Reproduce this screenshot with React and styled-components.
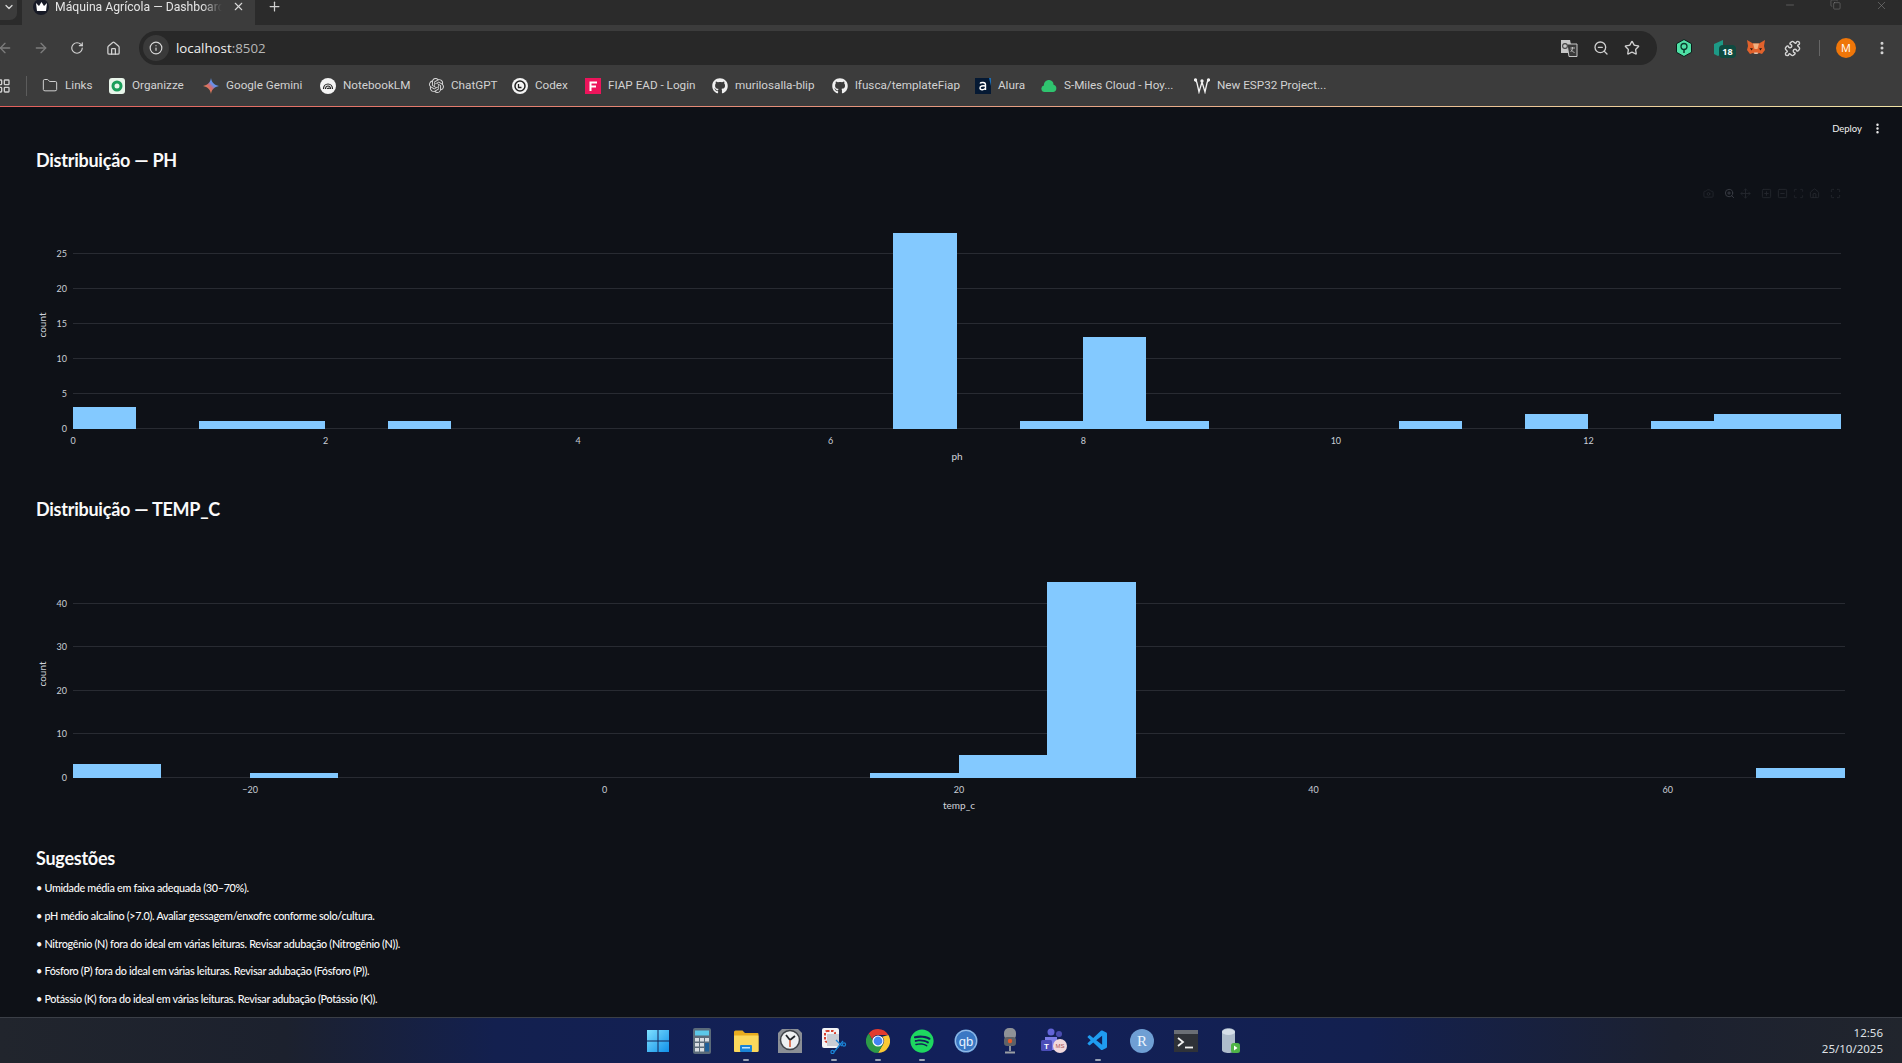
import React from "react";
import styled, { createGlobalStyle } from "styled-components";
import {
  ArrowLeft, ArrowRight, RotateCw, House, Info, Star, ZoomOut, ZoomIn, Puzzle, EllipsisVertical,
  X, Plus, Minus, ChevronDown, LayoutGrid, Folder, Copy, Camera, Move, SquarePlus, SquareMinus,
  Scan, Maximize,
} from "lucide-react";
import { FaGithub, FaSpotify } from "react-icons/fa";
import { SiOpenai } from "react-icons/si";
import { VscVscode } from "react-icons/vsc";

const GlobalStyle = createGlobalStyle`
  html, body { margin: 0; padding: 0; height: 100%; overflow: hidden; background: #0e1117; }
  * { box-sizing: border-box; }
`;

const Screen = styled.div`
  width: 1902px;
  height: 1063px;
  display: flex;
  flex-direction: column;
  overflow: hidden;
  font-family: "Noto Sans", sans-serif;
`;

/* ---------- browser chrome ---------- */
const TabStrip = styled.div`
  height: 25px;
  background: #2b2b2b;
  display: flex;
  align-items: stretch;
  color: #e6e6e6;
  position: relative;
`;
const TabList = styled.div`
  width: 17px;
  height: 20px;
  background: #3c3c3c;
  border-radius: 0 0 7px 0;
  display: flex;
  align-items: center;
  justify-content: center;
  padding-bottom: 7px;
  color: #d8d8d8;
`;
const ActiveTab = styled.div`
  margin-left: 5px;
  width: 233px;
  background: #3c3c3c;
  display: flex;
  align-items: center;
  padding: 0 0 12px 11px;
`;
const Favicon = styled.div`
  width: 16px;
  height: 16px;
  border-radius: 50%;
  background: #171a26;
  display: flex;
  align-items: center;
  justify-content: center;
  flex: none;
`;
const TabTitle = styled.span`
  margin-left: 6px;
  width: 167px;
  overflow: hidden;
  white-space: nowrap;
  font-family: "Roboto", sans-serif;
  font-size: 12.2px;
  color: #e4e4e4;
  -webkit-mask-image: linear-gradient(90deg, #000 88%, transparent);
  mask-image: linear-gradient(90deg, #000 88%, transparent);
`;
const TabClose = styled.span`
  margin-left: 10px;
  display: flex;
  color: #d8d8d8;
`;
const NewTab = styled.span`
  margin-left: 12px;
  display: flex;
  align-items: center;
  padding-bottom: 12px;
  color: #d0d0d0;
`;
const WindowControls = styled.div`
  margin-left: auto;
  display: flex;
  align-items: flex-start;
  color: #8a8a8a;
  padding-right: 14px;
  gap: 34px;
  margin-top: -1px;
`;
const Toolbar = styled.div`
  height: 40px;
  padding-top: 6px;
  background: #3c3c3c;
  display: flex;
  align-items: stretch;
`;
const NavButtons = styled.div`
  width: 139px;
  display: flex;
  align-items: center;
`;
const NavIcon = styled.span`
  width: 36px;
  margin-left: ${(p) => p.$ml || 0}px;
  display: flex;
  justify-content: center;
  color: ${(p) => (p.$dim ? "#7c7c7c" : "#d2d2d2")};
`;
const Omnibox = styled.div`
  width: 1518px;
  background: #282828;
  border-radius: 17px;
  display: flex;
  align-items: center;
  padding: 0 17px 0 4px;
`;
const SiteInfo = styled.span`
  width: 26px;
  height: 26px;
  border-radius: 50%;
  background: #3a3a3a;
  display: flex;
  align-items: center;
  justify-content: center;
  color: #d8d8d8;
`;
const Url = styled.span`
  margin-left: 7px;
  font-family: "Open Sans", sans-serif;
  font-size: 13.3px;
  color: #f0f0f0;
  span { color: #b8b8b8; }
`;
const OmniActions = styled.div`
  margin-left: auto;
  display: flex;
  align-items: center;
  gap: 15px;
  color: #cfcfcf;
`;
const Extensions = styled.div`
  flex: 1;
  display: flex;
  align-items: center;
  padding-left: 9px;
  color: #d4d4d4;
`;
const ExtSlot = styled.span`
  width: 36px;
  display: flex;
  justify-content: center;
  position: relative;
`;
const Badge = styled.span`
  position: absolute;
  left: 17px;
  top: 5px;
  width: 17px;
  height: 13px;
  border-radius: 4px;
  background: #0f4a40;
  color: #fff;
  font-family: "Open Sans", sans-serif;
  font-size: 9px;
  font-weight: 700;
  line-height: 13px;
  text-align: center;
`;
const ToolbarDivider = styled.span`
  width: 1px;
  height: 16px;
  background: #666;
  margin: 0 16px 0 9px;
`;
const Avatar = styled.span`
  width: 20px;
  height: 20px;
  border-radius: 50%;
  background: #ef7609;
  color: #fff;
  font-family: "Open Sans", sans-serif;
  font-size: 11px;
  line-height: 20px;
  text-align: center;
  flex: none;
`;
const MenuDots = styled.span`
  margin-left: 18px;
  display: flex;
  color: #d6d6d6;
`;
const BookmarkBar = styled.div`
  height: 41px;
  background: #3c3c3c;
  display: flex;
  align-items: center;
  color: #cfcfcf;
`;
const AppsIcon = styled.span`
  margin-left: -5px;
  display: flex;
`;
const BarDivider = styled.span`
  width: 1px;
  height: 20px;
  background: #5c5c5c;
  margin: 0 15px 0 15px;
`;
const Bookmark = styled.div`
  display: flex;
  align-items: center;
  gap: 7px;
  margin-right: 17px;
`;
const BookmarkIcon = styled.span`
  width: 16px;
  height: 16px;
  display: flex;
  align-items: center;
  justify-content: center;
  flex: none;
  color: #f0f0f0;
`;
const BookmarkLabel = styled.span`
  width: ${(p) => p.$w}px;
  padding-bottom: 2px;
  white-space: nowrap;
  font-family: "Roboto", sans-serif;
  font-size: 11.7px;
  color: #d2d2d2;
`;
const AccentLine = styled.div`
  height: 1px;
  background: linear-gradient(90deg, #e2605c 0%, #e59a80 50%, #f1e3a6 100%);
`;

/* ---------- streamlit page ---------- */
const Main = styled.main`
  flex: 1;
  position: relative;
  background: #0e1117;
  padding: 39px 36px 0;
  overflow: hidden;
  color: #fafafa;
  font-family: "Lato", sans-serif;
`;
const AppHeader = styled.div`
  position: absolute;
  top: 15px;
  right: 18px;
  display: flex;
  align-items: center;
  gap: 9px;
  font-size: 9.5px;
  color: #f2f2f2;
`;
const SectionTitle = styled.h3`
  margin: 0;
  height: 28px;
  line-height: 28px;
  font-size: 18px;
  font-weight: 700;
  letter-spacing: -0.25px;
  color: #fafafa;
`;
const ChartFrame = styled.div`
  position: relative;
  height: 321px;
`;
const ChartSvg = styled.svg`
  display: block;
  font-family: "Lato", sans-serif;
`;
const Modebar = styled.div`
  position: absolute;
  top: 14px;
  right: 25px;
  display: flex;
  align-items: center;
  gap: 5px;
  color: #24272e;
`;
const ModebarIcon = styled.span`
  display: flex;
  margin-left: ${(p) => (p.$group ? 5 : 0)}px;
  color: ${(p) => (p.$active ? "#3b3e46" : "inherit")};
`;
const Suggestions = styled.ul`
  list-style: none;
  margin: 2px 0 0;
  padding: 0;
`;
const Suggestion = styled.li`
  height: 27.8px;
  line-height: 27.8px;
  font-size: 10.8px;
  font-weight: 500;
  letter-spacing: -0.3px;
  color: #fafafa;
  white-space: nowrap;
`;

/* ---------- taskbar ---------- */
const Taskbar = styled.footer`
  height: 46px;
  flex: none;
  border-top: 1px solid #3b3f47;
  background: linear-gradient(90deg, #21252d 0%, #1c212e 15%, #13204f 26%, #12205a 50%, #13204f 72%, #1c2130 88%, #21252d 100%);
  display: flex;
  align-items: center;
`;
const TaskIcons = styled.div`
  margin-left: 636px;
  display: flex;
`;
const TaskTile = styled.div`
  width: 44px;
  height: 45px;
  display: flex;
  align-items: center;
  justify-content: center;
  position: relative;
  &::after {
    content: "";
    display: ${(p) => (p.$running ? "block" : "none")};
    position: absolute;
    bottom: 2px;
    left: 19px;
    width: 6px;
    height: 2.5px;
    border-radius: 2px;
    background: #9aa3b5;
  }
`;
const Clock = styled.div`
  margin-left: auto;
  padding-right: 19px;
  text-align: right;
  font-family: "Noto Sans", sans-serif;
  font-size: 11.5px;
  line-height: 16px;
  color: #dfe1e6;
`;

/* ---------- drawn icons ---------- */
const CrownIcon = () => (
  <svg width="11" height="9" viewBox="0 0 11 9"><path d="M0 1l3 3 2.5-4 2.5 4 3-3-1 8H1z" fill="#fff" /></svg>
);
const OrganizzeIcon = () => (
  <svg width="16" height="16" viewBox="0 0 16 16">
    <rect width="16" height="16" rx="3" fill="#e8f5ea" />
    <circle cx="8" cy="8" r="4" fill="none" stroke="#1a9e5a" strokeWidth="3" />
  </svg>
);
const GeminiIcon = () => (
  <svg width="16" height="16" viewBox="0 0 16 16">
    <defs>
      <linearGradient id="gem" x1="0" y1="1" x2="1" y2="0">
        <stop offset="0" stopColor="#e8a33b" />
        <stop offset=".45" stopColor="#d86a6a" />
        <stop offset=".6" stopColor="#6a8ee8" />
        <stop offset="1" stopColor="#4aa3f0" />
      </linearGradient>
    </defs>
    <path d="M8 0c.6 4.4 3.3 7.2 8 8-4.700.8-7.400 3.600-8 8-.6-4.400-3.300-7.200-8-8 4.700-.8 7.400-3.600 8-8z" fill="url(#gem)" />
  </svg>
);
const NotebookIcon = () => (
  <svg width="16" height="16" viewBox="0 0 16 16">
    <circle cx="8" cy="8" r="8" fill="#f4f4f4" />
    <path d="M3.500 11c0-3 2-5 4.500-5s4.500 2 4.500 5M5.500 11c0-1.600 1-3 2.500-3s2.500 1.400 2.500 3M7.500 11c0-.6.300-1 .8-1s.8.400.8 1" fill="none" stroke="#222" strokeWidth="1.200" />
  </svg>
);
const CodexIcon = () => (
  <svg width="16" height="16" viewBox="0 0 16 16">
    <circle cx="8" cy="8" r="8" fill="#f4f4f4" />
    <circle cx="8" cy="8" r="5" fill="none" stroke="#222" strokeWidth="1.500" />
    <path d="M6.500 6v3.500h3" fill="none" stroke="#222" strokeWidth="1.300" />
  </svg>
);
const FiapIcon = () => (
  <svg width="16" height="16" viewBox="0 0 16 16">
    <rect width="16" height="16" fill="#ed145b" />
    <path d="M4.500 3.500h7.500v2h-5.500v2h4.500v2h-4.500v3.500h-2z" fill="#fff" />
  </svg>
);
const AluraIcon = () => (
  <svg width="16" height="16" viewBox="0 0 16 16">
    <rect width="16" height="16" fill="#051933" />
    <path d="M14 0h2v8z" fill="#1c6fb8" />
    <path d="M5 5.500c.8-1.400 5.500-1.600 5.500 1.200v5.300M10.500 8c-3-.6-5.500 0-5.500 2s4 2.500 5.500 0" fill="none" stroke="#fff" strokeWidth="1.400" />
  </svg>
);
const CloudIcon = () => (
  <svg width="16" height="12" viewBox="0 0 16 12">
    <path d="M3.500 12a3.300 3.300 0 0 1-.6-6.500A5 5 0 0 1 8.300 0a4.500 4.500 0 0 1 4.200 4.800A3.700 3.700 0 0 1 12.500 12z" fill="#2fc46f" />
  </svg>
);
const WokwiIcon = () => (
  <svg width="16" height="16" viewBox="0 0 16 16" fill="none" stroke="#f2f2f2" strokeWidth="1.300">
    <path d="M1 2c1 0 1.500 1 2 3l2 9 3-10 3 10 2-9c.5-2 1-3 2-3" />
    <circle cx="1.500" cy="2" r="1" fill="#f2f2f2" />
    <circle cx="8" cy="3" r="1" fill="#f2f2f2" />
    <circle cx="14.500" cy="2" r="1" fill="#f2f2f2" />
  </svg>
);
const TranslateIcon = () => (
  <svg width="18" height="18" viewBox="0 0 18 18">
    <path d="M1 1h9l3 13H1z" fill="#c6c6c6" />
    <path d="M7 5h10v12.500H9z" fill="#3a3a3a" stroke="#c6c6c6" />
    <circle cx="5" cy="7" r="2.400" fill="none" stroke="#444" strokeWidth="1.100" />
    <path d="M10.500 9h4.500M12.500 8v1c0 2-1 3-2 4M11 10.500c.6 1.300 2 2.500 3.500 3" fill="none" stroke="#c6c6c6" strokeWidth=".9" />
  </svg>
);
const KeyHexIcon = () => (
  <svg width="16" height="18" viewBox="0 0 16 18">
    <path d="M8 .5l7.500 4.200v8.600L8 17.500.5 13.300V4.700z" fill="#4fe0a5" stroke="#0b1f1a" />
    <circle cx="8" cy="7.500" r="3" fill="none" stroke="#0b3a2c" strokeWidth="1.300" />
    <path d="M8 10.500V14" stroke="#0b3a2c" strokeWidth="1.500" />
  </svg>
);
const TealExtIcon = () => (
  <svg width="16" height="16" viewBox="0 0 16 16"><path d="M2 4l9-4v13l-5 3-4-2z" fill="#1d9a86" /></svg>
);
const FoxIcon = () => (
  <svg width="18" height="16" viewBox="0 0 18 16">
    <path d="M0 0l6 3.500h6L18 0l-1 6 1 4-3 4-3-1-1.500 1h-3L6 13l-3 1-3-4 1-4z" fill="#e2622c" />
    <path d="M6 3.500h6L10.500 9h-3z" fill="#f0b080" />
    <path d="M3 8l3 .5-1.500 2zM15 8l-3 .5 1.500 2z" fill="#26180f" />
    <path d="M7 12.500h4l-.5 1.500h-3z" fill="#d6c6b8" />
  </svg>
);
const WinIcon = () => (
  <svg width="24" height="24" viewBox="0 0 24 24">
    <defs>
      <linearGradient id="win" x1="0" y1="0" x2="1" y2="1">
        <stop offset="0" stopColor="#7fe0ff" />
        <stop offset="1" stopColor="#0f8fe8" />
      </linearGradient>
    </defs>
    <path d="M1 1h10.500v10.500H1zM12.500 1H23v10.500H12.500zM1 12.500h10.500V23H1zM12.500 12.500H23V23H12.500z" fill="url(#win)" />
  </svg>
);
const CalcIcon = () => (
  <svg width="20" height="26" viewBox="0 0 20 26">
    <rect x="1" width="18" height="26" rx="2" fill="#5b6b7a" />
    <rect x="3" y="2.500" width="14" height="5" fill="#5cc8e8" />
    <g fill="#d8dde2">
      <rect x="3" y="10" width="4" height="3.500" /><rect x="8" y="10" width="4" height="3.500" />
      <rect x="3" y="15" width="4" height="3.500" /><rect x="8" y="15" width="4" height="3.500" />
      <rect x="3" y="20" width="4" height="3.500" /><rect x="8" y="20" width="4" height="3.500" />
      <rect x="13" y="10" width="4" height="3.500" />
    </g>
    <rect x="13" y="15" width="4" height="8.500" fill="#1f5f9a" />
  </svg>
);
const FolderIcon = () => (
  <svg width="26" height="24" viewBox="0 0 26 24">
    <path d="M1 3a1.500 1.500 0 0 1 1.500-1.500h7L12 4h12.500A1 1 0 0 1 25.500 5v17.500H1z" fill="#e8ac1f" />
    <path d="M1 6.500h24.500v15a1.500 1.500 0 0 1-1.500 1.500H2.500A1.500 1.500 0 0 1 1 21.500z" fill="#fbd85c" />
    <rect x="7" y="16" width="12" height="7" rx="1" fill="#1a84d6" />
    <rect x="9" y="18" width="8" height="1.500" fill="#bfe5ff" />
  </svg>
);
const ClockIcon = () => (
  <svg width="26" height="26" viewBox="0 0 26 26">
    <path d="M5 1h16l4 4v20H1V5z" fill="#8b8f96" />
    <circle cx="13" cy="12" r="9.500" fill="#eef0f2" stroke="#3f4349" strokeWidth="1.500" />
    <path d="M13 12l-4-5M13 12l5-4" stroke="#23262b" strokeWidth="1.800" />
    <path d="M13 12v7" stroke="#d9552b" strokeWidth="1.500" />
  </svg>
);
const SnipIcon = () => (
  <svg width="26" height="26" viewBox="0 0 26 26">
    <rect x="1" y="0" width="17" height="20" rx="2" fill="#f3f4f6" />
    <rect x="4" y="3" width="10" height="11" rx="2" fill="none" stroke="#d8412f" strokeWidth="2" strokeDasharray="2.500 1.500" />
    <rect x="6" y="6" width="12" height="12" fill="#c9cdd4" />
    <path d="M13 24l9-11M15 12l6 6" stroke="#1a84d6" strokeWidth="1.300" />
    <circle cx="11.500" cy="24" r="1.600" fill="none" stroke="#1a84d6" strokeWidth="1.200" />
    <circle cx="23" cy="16.500" r="1.600" fill="none" stroke="#1a84d6" strokeWidth="1.200" />
  </svg>
);
const ChromeIcon = () => (
  <svg width="24" height="24" viewBox="0 0 24 24">
    <path d="M12 0a12 12 0 0 1 10.400 6H12a6 6 0 0 0-5.800 4.500L2.700 4.400A12 12 0 0 1 12 0z" fill="#e33b2e" />
    <path d="M22.400 6A12 12 0 0 1 12 24l5.200-9A6 6 0 0 0 16.200 7.700L22.400 6z" fill="#fcc934" />
    <path d="M12 24A12 12 0 0 1 2.700 4.400l5.200 9a6 6 0 0 0 9.300 1.600z" fill="#2d9a47" />
    <circle cx="12" cy="12" r="5.600" fill="#fff" />
    <circle cx="12" cy="12" r="4.400" fill="#4285f4" />
  </svg>
);
const QbIcon = () => (
  <svg width="24" height="24" viewBox="0 0 24 24">
    <circle cx="12" cy="12" r="11.500" fill="#6fa6e0" />
    <circle cx="12" cy="12" r="10.500" fill="#3a78c4" stroke="#cfe2f8" strokeWidth=".6" />
    <text x="12" y="16.500" textAnchor="middle" fontFamily="Liberation Sans, sans-serif" fontSize="13" fill="#e8f2ff">qb</text>
  </svg>
);
const MicIcon = () => (
  <svg width="16" height="26" viewBox="0 0 16 26">
    <rect x="2" y="0" width="12" height="12" rx="5" fill="#8e9297" />
    <rect x="2" y="9" width="12" height="9" rx="3" fill="#5e6268" />
    <circle cx="8" cy="13" r="2.200" fill="#e3592b" />
    <path d="M8 18v5M3 24.500h10" stroke="#9a9ea4" strokeWidth="1.800" />
  </svg>
);
const TeamsIcon = () => (
  <svg width="26" height="26" viewBox="0 0 26 26">
    <circle cx="10" cy="4" r="3.500" fill="#6264d8" />
    <circle cx="18" cy="6" r="3" fill="#4a4cb0" />
    <path d="M4 9h12v13H4z" fill="#7b7de8" />
    <rect x="0" y="12" width="11" height="11" rx="1.500" fill="#4b4db8" />
    <text x="5.500" y="20.500" textAnchor="middle" fontFamily="Liberation Sans, sans-serif" fontSize="8" fontWeight="700" fill="#fff">T</text>
    <circle cx="19" cy="18" r="7" fill="#f2d9dc" />
    <text x="19" y="20" textAnchor="middle" fontFamily="Liberation Sans, sans-serif" fontSize="6" fill="#a55">MS</text>
  </svg>
);
const RIcon = () => (
  <svg width="24" height="24" viewBox="0 0 24 24">
    <circle cx="12" cy="12" r="12" fill="#6f9fd4" />
    <text x="12" y="17" textAnchor="middle" fontFamily="Liberation Serif, serif" fontSize="15" fill="#eef5fc">R</text>
  </svg>
);
const TerminalIcon = () => (
  <svg width="24" height="22" viewBox="0 0 24 22">
    <rect width="24" height="22" fill="#2f3238" />
    <rect width="24" height="4" fill="#6a6e75" />
    <path d="M4 8l5 4-5 4" fill="none" stroke="#f2f2f2" strokeWidth="1.800" />
    <path d="M11 17.500h8" stroke="#f2f2f2" strokeWidth="1.800" />
  </svg>
);
const DbIcon = () => (
  <svg width="20" height="26" viewBox="0 0 20 26">
    <path d="M2 4c0-5 13-5 13 0v18c0 4-13 4-13 0z" fill="#aebccb" />
    <ellipse cx="8.500" cy="4" rx="6.500" ry="3" fill="#d5dee8" />
    <rect x="11" y="15" width="9" height="10" rx="2.500" fill="#4fb347" />
    <path d="M14 17.500l3.500 2.500-3.500 2.500z" fill="#fff" />
  </svg>
);

/* ---------- chart ---------- */
const PLOT_LEFT = 37;
const BASELINE = 254.5;

function Histogram({ plotWidth, xMin, xMax, binSize, bins, xTicks, xTitle, yTicks, yScale }) {
  const scaleX = plotWidth / (xMax - xMin);
  const toX = (v) => PLOT_LEFT + (v - xMin) * scaleX;
  return (
    <ChartSvg width="1830" height="321" viewBox="0 0 1830 321">
      {yTicks.map((t) => {
        const y = Math.round(BASELINE - t * yScale - 0.5) + 0.5;
        return (
          <g key={t}>
            <line x1={PLOT_LEFT} x2={PLOT_LEFT + plotWidth} y1={y} y2={y} stroke="#282b32" />
            <text x="31" y={y + 3} textAnchor="end" fontSize="9" fill="#c9ced6">{t}</text>
          </g>
        );
      })}
      {bins.map(([start, count]) => (
        <rect
          key={start}
          x={toX(start) - 0.4}
          y={BASELINE - 0.5 - count * yScale + (count > 20 ? 1 : 0)}
          width={binSize * scaleX}
          height={count * yScale + 1 - (count > 20 ? 1 : 0)}
          fill="#83c9ff"
          shapeRendering="crispEdges"
        />
      ))}
      {xTicks.map((t) => (
        <text key={t} x={toX(t)} y="270" textAnchor="middle" fontSize="9" fill="#c9ced6">
          {t < 0 ? `\u2212${-t}` : t}
        </text>
      ))}
      <text x={PLOT_LEFT + plotWidth / 2} y="285.500" textAnchor="middle" fontSize="10" fill="#d0d4db">{xTitle}</text>
      <text transform="translate(9.500 151) rotate(-90)" textAnchor="middle" fontSize="10" fill="#d0d4db">count</text>
    </ChartSvg>
  );
}

const phBins = [[0, 3], [1, 1], [1.5, 1], [2.5, 1], [6.5, 28], [7.5, 1], [8, 13], [8.5, 1], [10.5, 1], [11.5, 2], [12.5, 1], [13, 2], [13.5, 2]];
const tempBins = [[-30, 3], [-20, 1], [15, 1], [20, 5], [25, 45], [65, 2]];

const bookmarks = [
  { label: "Links", w: 27, icon: <Folder size={17} strokeWidth={1.5} color="#d0d0d0" /> },
  { label: "Organizze", w: 54, icon: <OrganizzeIcon /> },
  { label: "Google Gemini", w: 77, icon: <GeminiIcon /> },
  { label: "NotebookLM", w: 68, icon: <NotebookIcon /> },
  { label: "ChatGPT", w: 44, icon: <SiOpenai size={15} color="#d8d8d8" /> },
  { label: "Codex", w: 33, icon: <CodexIcon /> },
  { label: "FIAP EAD - Login", w: 87, icon: <FiapIcon /> },
  { label: "murilosalla-blip", w: 80, icon: <FaGithub size={16} /> },
  { label: "lfusca/templateFiap", w: 103, icon: <FaGithub size={16} /> },
  { label: "Alura", w: 26, icon: <AluraIcon /> },
  { label: "S-Miles Cloud - Hoy...", w: 113, icon: <CloudIcon /> },
  { label: "New ESP32 Project...", w: 108, icon: <WokwiIcon /> },
];

const taskIcons = [
  { key: "win", icon: <WinIcon /> },
  { key: "calc", icon: <CalcIcon /> },
  { key: "folder", icon: <FolderIcon />, running: true },
  { key: "clock", icon: <ClockIcon /> },
  { key: "snip", icon: <SnipIcon />, running: true },
  { key: "chrome", icon: <ChromeIcon />, running: true },
  { key: "spotify", icon: <FaSpotify size={24} color="#1ed760" />, running: true },
  { key: "qb", icon: <QbIcon /> },
  { key: "mic", icon: <MicIcon /> },
  { key: "teams", icon: <TeamsIcon /> },
  { key: "vscode", icon: <VscVscode size={24} color="#1f9cf0" />, running: true },
  { key: "r", icon: <RIcon /> },
  { key: "term", icon: <TerminalIcon /> },
  { key: "db", icon: <DbIcon /> },
];

const suggestions = [
  "• Umidade média em faixa adequada (30–70%).",
  "• pH médio alcalino (>7.0). Avaliar gessagem/enxofre conforme solo/cultura.",
  "• Nitrogênio (N) fora do ideal em várias leituras. Revisar adubação (Nitrogênio (N)).",
  "• Fósforo (P) fora do ideal em várias leituras. Revisar adubação (Fósforo (P)).",
  "• Potássio (K) fora do ideal em várias leituras. Revisar adubação (Potássio (K)).",
];

export default function App() {
  return (
    <Screen>
      <GlobalStyle />
      <TabStrip>
        <TabList><ChevronDown size={12} strokeWidth={2.5} /></TabList>
        <ActiveTab>
          <Favicon><CrownIcon /></Favicon>
          <TabTitle>Máquina Agrícola — Dashboard</TabTitle>
          <TabClose><X size={13} /></TabClose>
        </ActiveTab>
        <NewTab><Plus size={15} /></NewTab>
        <WindowControls>
          <Minus size={12} strokeWidth={1} />
          <Copy size={11} strokeWidth={1} />
          <X size={13} strokeWidth={1} />
        </WindowControls>
      </TabStrip>
      <Toolbar>
        <NavButtons>
          <NavIcon $dim $ml={-13}><ArrowLeft size={16} /></NavIcon>
          <NavIcon $dim><ArrowRight size={16} /></NavIcon>
          <NavIcon><RotateCw size={14} /></NavIcon>
          <NavIcon><House size={15} /></NavIcon>
        </NavButtons>
        <Omnibox>
          <SiteInfo><Info size={14} /></SiteInfo>
          <Url>localhost<span>:8502</span></Url>
          <OmniActions>
            <TranslateIcon />
            <ZoomOut size={16} />
            <Star size={16} />
          </OmniActions>
        </Omnibox>
        <Extensions>
          <ExtSlot><KeyHexIcon /></ExtSlot>
          <ExtSlot><TealExtIcon /><Badge>18</Badge></ExtSlot>
          <ExtSlot><FoxIcon /></ExtSlot>
          <ExtSlot><Puzzle size={17} /></ExtSlot>
          <ToolbarDivider />
          <Avatar>M</Avatar>
          <MenuDots><EllipsisVertical size={16} strokeWidth={2.5} /></MenuDots>
        </Extensions>
      </Toolbar>
      <BookmarkBar>
        <AppsIcon><LayoutGrid size={16} /></AppsIcon>
        <BarDivider />
        {bookmarks.map((b) => (
          <Bookmark key={b.label}>
            <BookmarkIcon>{b.icon}</BookmarkIcon>
            <BookmarkLabel $w={b.w}>{b.label}</BookmarkLabel>
          </Bookmark>
        ))}
      </BookmarkBar>
      <AccentLine />
      <Main>
        <AppHeader>
          <span>Deploy</span>
          <EllipsisVertical size={13} strokeWidth={2.5} />
        </AppHeader>
        <SectionTitle>Distribuição — PH</SectionTitle>
        <ChartFrame>
          <Histogram
            plotWidth={1768}
            xMin={0}
            xMax={14}
            binSize={0.5}
            bins={phBins}
            xTicks={[0, 2, 4, 6, 8, 10, 12]}
            xTitle="ph"
            yTicks={[0, 5, 10, 15, 20, 25]}
            yScale={7}
          />
          <Modebar>
            <ModebarIcon><Camera size={11} /></ModebarIcon>
            <ModebarIcon $group $active><ZoomIn size={11} /></ModebarIcon>
            <ModebarIcon><Move size={11} /></ModebarIcon>
            <ModebarIcon $group><SquarePlus size={11} /></ModebarIcon>
            <ModebarIcon><SquareMinus size={11} /></ModebarIcon>
            <ModebarIcon><Scan size={11} /></ModebarIcon>
            <ModebarIcon><House size={11} /></ModebarIcon>
            <ModebarIcon $group><Maximize size={11} /></ModebarIcon>
          </Modebar>
        </ChartFrame>
        <SectionTitle>Distribuição — TEMP_C</SectionTitle>
        <ChartFrame>
          <Histogram
            plotWidth={1772}
            xMin={-30}
            xMax={70}
            binSize={5}
            bins={tempBins}
            xTicks={[-20, 0, 20, 40, 60]}
            xTitle="temp_c"
            yTicks={[0, 10, 20, 30, 40]}
            yScale={4.36}
          />
        </ChartFrame>
        <SectionTitle>Sugestões</SectionTitle>
        <Suggestions>
          {suggestions.map((s) => <Suggestion key={s}>{s}</Suggestion>)}
        </Suggestions>
      </Main>
      <Taskbar>
        <TaskIcons>
          {taskIcons.map((t) => <TaskTile key={t.key} $running={t.running}>{t.icon}</TaskTile>)}
        </TaskIcons>
        <Clock>
          <div>12:56</div>
          <div>25/10/2025</div>
        </Clock>
      </Taskbar>
    </Screen>
  );
}
